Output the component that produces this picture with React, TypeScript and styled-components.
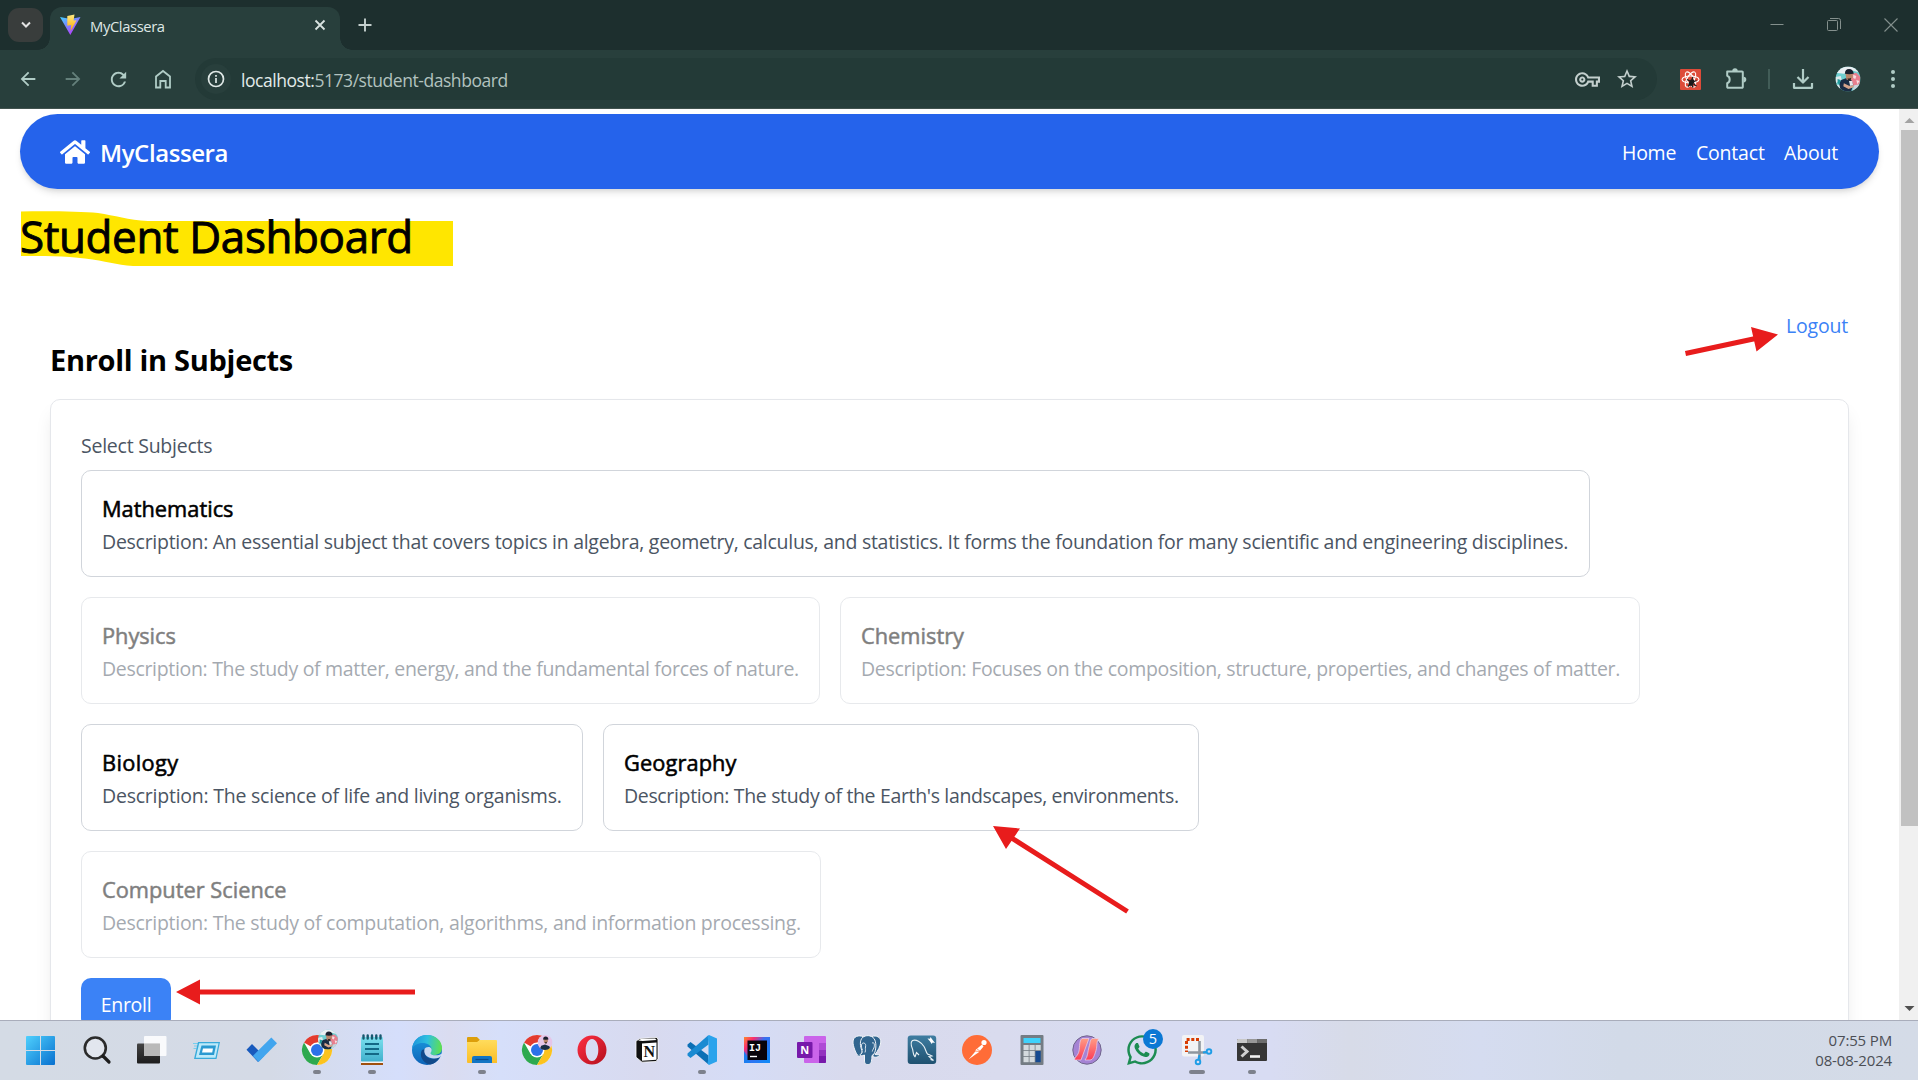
import React from "react";
import styled, { createGlobalStyle } from "styled-components";
import { FaHome, FaWhatsapp } from "react-icons/fa";
import { MdArrowBack, MdArrowForward, MdRefresh, MdStarBorder, MdOutlineVpnKey } from "react-icons/md";

const GlobalStyle = createGlobalStyle`
  * { box-sizing: border-box; }
  html, body { margin: 0; padding: 0; overflow: hidden; }
  body { font-family: "Open Sans", "Noto Sans", sans-serif; }
  h1, h2, h3, p { margin: 0; }
  svg { display: block; flex: none; }
`;

const Screen = styled.div`
  width: 1918px;
  height: 1080px;
  display: flex;
  flex-direction: column;
  overflow: hidden;
  background: #fff;
`;

/* ---------- browser chrome ---------- */
const TabStrip = styled.div`
  height: 50px;
  flex: none;
  background: #1d2f2e;
  display: flex;
  align-items: flex-start;
`;
const TabSearch = styled.div`
  width: 35px;
  height: 34px;
  margin: 8px 7px 0 8px;
  border-radius: 11px;
  background: #393d3c;
  display: flex;
  align-items: center;
  justify-content: center;
`;
const Tab = styled.div`
  position: relative;
  width: 290px;
  height: 43px;
  margin-top: 7px;
  border-radius: 12px 12px 0 0;
  background: #283f3c;
  display: flex;
  align-items: flex-start;
  padding: 7px 14px 0 10px;
  &::before, &::after {
    content: "";
    position: absolute;
    bottom: 0;
    width: 12px;
    height: 12px;
  }
  &::before { left: -12px; background: radial-gradient(circle at 0 0, transparent 11.5px, #283f3c 12px); }
  &::after { right: -12px; background: radial-gradient(circle at 100% 0, transparent 11.5px, #283f3c 12px); }
`;
const TabTitle = styled.div`
  flex: 1;
  margin-left: 9px;
  padding-top: 1px;
  font-size: 14.8px;
  line-height: 22px;
  letter-spacing: -0.4px;
  color: #dfe8e6;
`;
const NewTab = styled.div`
  margin: 17px 0 0 18px;
`;
const WindowButtons = styled.div`
  margin-left: auto;
  display: flex;
  gap: 43px;
  padding: 17px 20px 0 0;
`;
const Toolbar = styled.div`
  height: 59px;
  flex: none;
  background: #283f3c;
  border-bottom: 1px solid #42534f;
  display: flex;
  align-items: center;
  color: #b0ccc6;
  padding-left: 15px;
`;
const NavIcons = styled.div`
  display: flex;
  gap: 19px;
  width: 180px;
`;
const NavIcon = styled.div<{ $dim?: boolean }>`
  width: 26px;
  height: 26px;
  display: flex;
  align-items: center;
  justify-content: center;
  color: ${(p) => (p.$dim ? "#64807b" : "#b0ccc6")};
`;
const Omnibox = styled.div`
  width: 1462px;
  height: 42px;
  border-radius: 21px;
  background: #233a37;
  display: flex;
  align-items: center;
  padding: 0 18px 0 6px;
`;
const InfoChip = styled.div`
  width: 30px;
  height: 30px;
  border-radius: 50%;
  background: #283f3c;
  display: flex;
  align-items: center;
  justify-content: center;
`;
const Url = styled.div`
  flex: 1;
  margin-left: 10px;
  padding-top: 1px;
  font-size: 17.5px;
  line-height: 24px;
  letter-spacing: -0.45px;
  color: #b2c2bf;
  span { color: #e2ebe9; }
`;
const OmniIcons = styled.div`
  display: flex;
  align-items: center;
  gap: 15px;
  color: #c3cfcd;
`;
const Extensions = styled.div`
  display: flex;
  align-items: center;
  margin-left: 23px;
`;
const ExtIcon = styled.svg<{ $gap: number }>`
  margin-left: ${(p) => p.$gap}px;
`;
const Divider = styled.div`
  width: 2px;
  height: 20px;
  margin: 0 22px 0 21px;
  background: #425d58;
`;

/* ---------- page ---------- */
const Viewport = styled.div`
  height: 911px;
  flex: none;
  display: flex;
  overflow: hidden;
`;
const Page = styled.main`
  width: 1899px;
  height: 1170px;
  flex: none;
  padding: 5px 20px 0;
`;
const Navbar = styled.nav`
  height: 75px;
  width: 1859px;
  border-radius: 37.5px;
  background: #2563eb;
  color: #fff;
  display: flex;
  align-items: center;
  justify-content: space-between;
  padding: 0 40px;
  box-shadow: 0 5px 7.5px -1px rgba(0, 0, 0, 0.1), 0 2.5px 5px -2px rgba(0, 0, 0, 0.1);
`;
const Brand = styled.div`
  display: flex;
  align-items: center;
  gap: 10px;
  font-size: 24px;
  line-height: 35px;
  font-weight: 600;
  letter-spacing: -0.43px;
`;
const BrandName = styled.span`
  padding-top: 2px;
`;
const Links = styled.div`
  display: flex;
  gap: 20px;
  font-size: 19.5px;
  line-height: 30px;
  padding-top: 2px;
`;
const Fit = styled.span<{ $w?: number; $ls?: number }>`
  display: inline-block;
  white-space: nowrap;
  width: ${(p) => (p.$w ? p.$w + "px" : "auto")};
  letter-spacing: ${(p) => p.$ls || 0}px;
`;
const Title = styled.h1`
  position: relative;
  margin-top: 20px;
  height: 50px;
  font-size: 44px;
  line-height: 55px;
  font-weight: 400;
  letter-spacing: -0.4px;
  color: #000;
  -webkit-text-stroke: 0.9px #000;
  span { position: relative; }
`;
const Overlay = styled.svg<{ $x: number; $y: number }>`
  position: absolute;
  left: ${(p) => p.$x}px;
  top: ${(p) => p.$y}px;
  overflow: visible;
  pointer-events: none;
  -webkit-text-stroke: 0;
`;
const Section = styled.section`
  padding: 51px 30px 0;
`;
const LogoutRow = styled.div`
  display: flex;
  justify-content: flex-end;
  height: 30px;
  padding-top: 1px;
  font-size: 19.5px;
  line-height: 30px;
  color: #3b82f6;
`;
const SectionTitle = styled.h2`
  font-size: 29px;
  line-height: 40px;
  font-weight: 700;
  letter-spacing: -0.3px;
  color: #000;
  margin-bottom: 19px;
`;
const Panel = styled.div`
  width: 1799px;
  height: 700px;
  border: 1px solid #e5e7eb;
  border-radius: 10px;
  padding: 30px;
  box-shadow: 0 12.5px 19px -4px rgba(0, 0, 0, 0.1), 0 5px 7.5px -5px rgba(0, 0, 0, 0.1);
`;
const Label = styled.div`
  height: 30px;
  padding-top: 1px;
  font-size: 19.5px;
  line-height: 30px;
  letter-spacing: -0.24px;
  color: #4b5563;
  margin-bottom: 10px;
`;
const Subjects = styled.div`
  display: flex;
  flex-wrap: wrap;
  gap: 20px;
`;
const Subject = styled.div<{ $w: number; $off?: boolean }>`
  width: ${(p) => p.$w}px;
  height: 107px;
  border: 1px solid #d1d5db;
  border-radius: 10px;
  padding: 20px;
  opacity: ${(p) => (p.$off ? 0.5 : 1)};
  white-space: nowrap;
`;
const SubjectName = styled.h3`
  font-size: 21.8px;
  line-height: 35px;
  font-weight: 400;
  color: #000;
  -webkit-text-stroke: 0.55px #000;
`;
const SubjectText = styled.p`
  padding-top: 1px;
  font-size: 19.5px;
  line-height: 30px;
  color: #4b5563;
`;
const EnrollButton = styled.button`
  display: block;
  width: 90px;
  height: 50px;
  margin-top: 20px;
  padding: 3px 0 0;
  border: 0;
  border-radius: 10px;
  background: #3b82f6;
  color: #fff;
  font-family: inherit;
  font-size: 19.5px;
  line-height: 30px;
  letter-spacing: -0.3px;
`;
const Scrollbar = styled.div`
  width: 19px;
  height: 911px;
  background: #f0f0f0;
  display: flex;
  flex-direction: column;
  align-items: flex-end;
  justify-content: space-between;
`;
const Thumb = styled.div`
  width: 17px;
  height: 696px;
  margin-bottom: auto;
  background: #c1c1c1;
`;

/* ---------- taskbar ---------- */
const Taskbar = styled.footer`
  height: 60px;
  flex: none;
  border-top: 1px solid #a9adbb;
  background: linear-gradient(90deg, #d4dbe5 0, #d4dae6 270px, #d5defb 400px, #dadcf0 450px, #d6dffa 500px, #d8daef 650px, #d5dcf6 740px, #d8daed 850px, #d9dbee 1000px, #d8dcf2 1150px, #d8dcf3 1270px, #d7dbe8 1350px, #d5dcf0 1480px, #d2dae8 1620px, #d4dbe7 1918px);
  display: flex;
  justify-content: space-between;
  padding-left: 14.5px;
`;
const Apps = styled.div`
  display: flex;
`;
const AppSlot = styled.div`
  width: 55px;
  display: flex;
  flex-direction: column;
  align-items: center;
  padding-top: 12px;
`;
const Running = styled.div<{ $wide?: boolean }>`
  width: ${(p) => (p.$wide ? 16 : 8)}px;
  height: 4px;
  margin-top: 3px;
  border-radius: 2px;
  background: #7d818c;
`;
const Clock = styled.div`
  width: 120px;
  margin-right: 26px;
  padding-top: 9px;
  text-align: right;
  font-size: 15px;
  line-height: 20px;
  letter-spacing: -0.15px;
  color: #4b4e55;
`;

const RED = "#e81c1c";

/* A small round portrait, used for the profile picture and the profile badge */
const Portrait = ({ cx, cy, r, solo }: { cx: number; cy: number; r: number; solo?: boolean }) => (
  <g transform={`translate(${cx - r} ${cy - r}) scale(${r / 12})`}>
    <clipPath id={`p${cx}${cy}${r}`}><circle cx="12" cy="12" r="12" /></clipPath>
    <g clipPath={`url(#p${cx}${cy}${r})`}>
      <rect width="24" height="24" fill={solo ? "#e5c5e8" : "#6fcfd0"} />
      {!solo && <>
        <path d="M0 0h24v6L17 4 8 7 0 6z" fill="#e9eff2" />
        <path d="M16 7l4-1 4 4-1 7-5 3-4-7z" fill="#e8808f" />
        <path d="M17 8l3 1-1 3-2-1zM20 13l3 1-2 3z" fill="#f7dfe3" />
        <path d="M0 10l5-1 1 4-6 3zM0 17l4 1 2 6H0z" fill="#dfe9ea" />
        <path d="M18 18l5-1-2 7h-5z" fill="#c9d4dc" />
      </>}
      <path d={solo ? "M3 24l3-7 6-2 7 3 2 6z" : "M5 24l-1.500-8 2-3 5-2 5 2.500 1.500 4-2 6.500z"} fill="#1a2c45" />
      <path d="M9.500 6.500h7v4l-2.500 3-3.500-1z" fill="#b98469" />
      <path d="M9 7Q9 2.500 13 2.500T17.500 7L13 7.500z" fill="#18202e" />
      <path d="M11.500 11.200q2 1 3.500-.3l-.5 2.500-2 .3z" fill="#2a2422" />
      {!solo && <>
        <path d="M8 16l5 2.500 4-.5.500 2-5 1.500-5-2.500z" fill="#d6a48b" />
        <path d="M2 12l3 1-1 4-2-1z" fill="#209a9c" />
        <path d="M13 14l3 0 1 4-3 .5z" fill="#e6eaee" />
      </>}
    </g>
  </g>
);

const ChromeLogo = () => (
  <g>
    <circle cx="17" cy="17" r="15" fill="#fff" />
    <path d="M17 17L4 9.5A15 15 0 0 1 30 9.5H17z" fill="#e33b2e" />
    <path d="M4 9.5A15 15 0 0 0 17 32L23.5 20.75 17 17 10.5 20.75z" fill="#2da94f" />
    <path d="M30 9.5A15 15 0 0 1 17 32L23.5 20.75 17 9.5z" fill="#fcc31e" />
    <circle cx="17" cy="17" r="7.5" fill="#fff" />
    <circle cx="17" cy="17" r="6" fill="#2c72e8" />
  </g>
);

const apps: { id: string; run?: boolean; wide?: boolean; art: React.ReactNode }[] = [
  { id: "start", art: <>
    <defs><linearGradient id="win" x1="0" y1="0" x2="1" y2="1"><stop offset="0" stopColor="#4fd0fd" /><stop offset="1" stopColor="#0870cf" /></linearGradient></defs>
    <path d="M2 3h13v14H1V4a1 1 0 0 1 1-1zM16 3h13a1 1 0 0 1 1 1v13H16zM1 18h14v14H2a1 1 0 0 1-1-1zM16 18h14v13a1 1 0 0 1-1 1H16z" fill="url(#win)" />
  </> },
  { id: "search", art: <>
    <circle cx="15.3" cy="15" r="10.5" fill="#e2e6ee" stroke="#2b2b2b" strokeWidth="2.6" />
    <path d="M23 23l6 6" stroke="#1d1d1d" strokeWidth="3.2" strokeLinecap="round" />
  </> },
  { id: "views", art: <>
    <defs><linearGradient id="tv" x1="0" y1="0" x2="0" y2="1"><stop offset="0" stopColor="#444" /><stop offset="1" stopColor="#1d1d1d" /></linearGradient></defs>
    <rect x="2" y="10.5" width="23" height="20" rx="1" fill="url(#tv)" />
    <rect x="9" y="3" width="22.5" height="20" rx="1" fill="#fff" opacity=".86" />
    <path d="M9 10.5h16V23H10a1 1 0 0 1-1-1z" fill="#b9b9b9" />
  </> },
  { id: "run", art: <>
    <path d="M3 10.500h5M4 13h4M3.500 15.500h3" stroke="#75cfee" strokeWidth="1" />
    <path d="M8 9h22l-3.500 17H4z" fill="#39aada" />
    <path d="M9.200 10.300h19.300L25.500 24.700H5.700z" fill="#bdeafa" />
    <path d="M11.500 12.500h14.500L24 22H9z" fill="#2b9ad1" />
    <path d="M13 15.500h10l-.8 4H12z" fill="#fff" />
  </> },
  { id: "todo", art: <>
    <path d="M7 11l-5.500 5.700 11.500 12.300 6-6z" fill="#185abd" />
    <path d="M26.300 4.500L32 10.300 13.600 29 7.800 23z" fill="#41a5ee" />
  </> },
  { id: "chrome-a", run: true, art: <><ChromeLogo /><Portrait cx={28} cy={6.5} r={10} /></> },
  { id: "notepad", run: true, art: <>
    <defs><linearGradient id="np" x1="0" y1="0" x2="0" y2="1"><stop offset="0" stopColor="#7be0ee" /><stop offset="1" stopColor="#3fafcc" /></linearGradient></defs>
    <rect x="6" y="4" width="22" height="25" rx="1" fill="url(#np)" />
    <path d="M6 28.500h22v1.500H6z" fill="#f3f3f3" /><path d="M6 30h22v2H6z" fill="#a0500f" />
    <path d="M10 11h14M10 16h14M10 21h14" stroke="#136986" strokeWidth="2" />
    <path d="M8.500 2.500v3M12.700 2.500v3M17 2.500v3M21.300 2.500v3M25.500 2.500v3" stroke="#17586f" strokeWidth="2.400" strokeLinecap="round" />
  </> },
  { id: "edge", art: <>
    <defs>
      <linearGradient id="e1" x1="0" y1=".3" x2="1" y2=".4"><stop offset="0" stopColor="#1d93dc" /><stop offset=".5" stopColor="#2fc0df" /><stop offset="1" stopColor="#5fe04f" /></linearGradient>
      <linearGradient id="e2" x1="0" y1="0" x2="0" y2="1"><stop offset="0" stopColor="#1c9ce0" /><stop offset="1" stopColor="#0d63b8" /></linearGradient>
    </defs>
    <circle cx="17" cy="17" r="15" fill="url(#e2)" />
    <path d="M2 16C3 7 9 2 17 2c9 0 15 6 15 13 0 5-4 7-8 7-3 0-5-1-4-2 1-1 1.500-2 1.500-3.500 0-4-4-6.500-9-6.500-5 0-9 2.500-10.500 6z" fill="url(#e1)" />
    <path d="M12 17c-3 5 0 13 8 14.500 4-.5 8-3.500 10-7.500-6 3-17 3-15-8z" fill="#114a8b" />
    <path d="M14.500 16c-1.500 6 4 9.500 9.500 9.500 4 0 6-1.300 7-2.500l1.300 1-.8 1.500 1.500 1V20l-4 2c-4 1-9-.2-8.500-2 2.500-3.500.5-6-2-6-2 0-3.300.8-4 2z" fill="#d8dff4" opacity=".92" />
  </> },
  { id: "files", run: true, art: <>
    <defs><linearGradient id="fl" x1="0" y1="0" x2="0" y2="1"><stop offset="0" stopColor="#ffdc5c" /><stop offset="1" stopColor="#fbbd26" /></linearGradient></defs>
    <path d="M2 5a1 1 0 0 1 1-1h9l3 3-3 3H2z" fill="#dd9f0b" />
    <path d="M2 9h10l3-2h16a1 1 0 0 1 1 1v22H3a1 1 0 0 1-1-1z" fill="url(#fl)" />
    <path d="M7 30v-5a2 2 0 0 1 2-2h16a2 2 0 0 1 2 2v5z" fill="#1275c4" />
    <path d="M10.500 26.500h13" stroke="#0b4d8d" strokeWidth="1.200" />
  </> },
  { id: "chrome-b", art: <><ChromeLogo /><Portrait cx={25} cy={9.5} r={7.5} solo /></> },
  { id: "opera", art: <>
    <defs><linearGradient id="op" x1="0" y1="0" x2="1" y2="1"><stop offset="0" stopColor="#ff2f43" /><stop offset="1" stopColor="#b3101c" /></linearGradient></defs>
    <path fillRule="evenodd" d="M17 2.500a14.500 14.500 0 1 0 0 29 14.500 14.500 0 0 0 0-29zm0 3.500c4 0 6.300 5 6.300 11S21 28 17 28s-6.300-5-6.300-11S13 6 17 6z" fill="url(#op)" />
  </> },
  { id: "notion", art: <>
    <path d="M6 8l4-2.500 17-1 1 2V26l-2 2.500-14 .7-6-5z" fill="#111" stroke="#fff" strokeWidth=".8" />
    <path d="M8 7.500l3-1.500 14-.5 1.500 1.500-14 1z" fill="#fff" />
    <path d="M12 10.500l14.500-1v17.300L12 27.800z" fill="#fff" />
    <path d="M7.500 9l2.800 2.500V26l-2.800-3z" fill="#111" />
    <text x="19.300" y="24" textAnchor="middle" fontFamily="Liberation Serif, serif" fontWeight="700" fontSize="16" fill="#111">N</text>
  </> },
  { id: "code", run: true, art: <>
    <path d="M2.500 11.500l3-2.500 18 13.500v9L2.500 13.500z" fill="#0b6fb5" />
    <path d="M2.500 22.500l3 2.500 18-13.500v-9.500L2.500 20.500z" fill="#1a8ad2" />
    <path d="M24 2l8 3.500v23L24 32l-1.500-1.500 1-6V9.500l-1-6z" fill="#2aa3ec" />
  </> },
  { id: "idea", art: <>
    <defs><linearGradient id="ij" x1="0" y1="0" x2="1" y2=".8"><stop offset="0" stopColor="#fc8a2c" /><stop offset=".25" stopColor="#fb2b70" /><stop offset=".5" stopColor="#3a6df0" /><stop offset="1" stopColor="#1288f7" /></linearGradient></defs>
    <rect x="4" y="4" width="26" height="26" fill="url(#ij)" />
    <path d="M4 18l7 12H4z" fill="#1c7df0" />
    <rect x="7.500" y="7.500" width="19.500" height="19.500" fill="#08040a" />
    <text x="9" y="17.500" fontFamily="Liberation Mono, monospace" fontWeight="700" fontSize="10" fill="#fff">IJ</text>
    <path d="M10 23.500h7" stroke="#fff" strokeWidth="1.400" />
  </> },
  { id: "onenote", art: <>
    <rect x="9" y="3" width="22" height="27" rx="1" fill="#ca64ea" />
    <path d="M24 10h7v7h-7z" fill="#ae4bd5" /><path d="M24 17h7v6h-7z" fill="#9332bf" /><path d="M24 23h7v6a1 1 0 0 1-1 1h-6z" fill="#7719aa" />
    <rect x="2" y="9" width="15.500" height="16" rx="1" fill="#7719aa" />
    <text x="9.700" y="21" textAnchor="middle" fontFamily="Open Sans, sans-serif" fontWeight="700" fontSize="11" fill="#fff">N</text>
  </> },
  { id: "postgres", art: <g fill="#31658f" stroke="#f2f5f9" strokeWidth="1" strokeLinejoin="round">
    <path d="M13 3.500C9 2 3 3 3 9c0 4 3 12.500 5.500 14 1.500.8 2.500-1 3.500-2.500z" />
    <path d="M22 3.500c4-1.500 9 .5 8.800 5.500-.2 4-3 9-5.800 12.500l5 .5c-1 2-5 3-7 1.500z" />
    <path d="M12.500 4.500C16 1.800 21 2 24 5.500c2.500 3.500 2.500 11 0 15.500l-2 1.500c-.3 4 0 8.500-3.500 9-3.500.3-4-1.500-4-4.500v-5c-3 1.500-5 .5-4.500-.5 2-.8 2.500-2 2-4-2-4-2.500-10 .5-13z" />
    <path d="M12.500 17c-2-4-1-7 1-7s2.500 2 2 4c-.5 2 .5 3-.5 5.500M22 10c2.500-1 2.500 1.500 2.300 3.500s-2 3.500-2 5" fill="none" strokeWidth=".9" />
  </g> },
  { id: "mysql", art: <>
    <defs><linearGradient id="ms" x1="0" y1="0" x2="0" y2="1"><stop offset="0" stopColor="#3f7da1" /><stop offset="1" stopColor="#1f5170" /></linearGradient></defs>
    <rect x="2.700" y="2.500" width="28.500" height="28.500" rx="3" fill="url(#ms)" />
    <path d="M10 24c-2.500-3-1.500-5-2.500-8C6 12.500 5.500 9 7.500 7.500c3.500-1.500 8.500 1.500 11.500 6 1.800 3 2 6 3.500 7.500 1.500.8 3 1 4.500 2l-3 .5 4.500 4-3-1M10 24l1.500-4.500 2.500 2.500" fill="none" stroke="#e8f0f4" strokeWidth="1.100" />
    <path d="M22.500 5.500l2.500.3.500-1.800 1.800 2.500 2.700 3.500-2.300-.5-1 1.500-2-3z" fill="#fff" />
  </> },
  { id: "postman", art: <>
    <circle cx="17" cy="17" r="15" fill="#ff6c37" />
    <path d="M8.500 26.500l6-7 1.500-3 6-5 1.500 2-5 6-3 2z" fill="#fff" />
    <circle cx="24" cy="9.500" r="2.600" fill="#fff" />
    <path d="M14 18l6 .5M16.500 15.500l4 3" stroke="#ff6c37" strokeWidth=".7" />
  </> },
  { id: "calculator", art: <>
    <rect x="5.500" y="2" width="23" height="30" rx="1" fill="#747c84" />
    <rect x="8.500" y="5" width="17" height="5" fill="#3fd2fb" />
    {[0, 1, 2].map((r) => [0, 1, 2].map((c) => (r > 0 && c === 2 ? null : <rect key={`${r}${c}`} x={8.5 + c * 6} y={12 + r * 6} width="5.2" height="5.2" fill="#d4dade" />)))}
    <rect x="20.500" y="18" width="5.200" height="11.200" fill="#164a91" />
  </> },
  { id: "studio", art: <>
    <defs><linearGradient id="st" x1="0" y1="0" x2="0" y2="1"><stop offset="0" stopColor="#ff9b84" /><stop offset="1" stopColor="#fb3d58" /></linearGradient></defs>
    <circle cx="17" cy="17" r="14.200" fill="#a583d4" stroke="#70668c" strokeWidth="1" />
    <path d="M12 5.500h7L11 27H4.500c0-3 3.500-4 4.500-9s0-10 3-12.500zM22 5.500h7c-3 3-1.500 7-3 12s-3 9.500-6 9.500h-5c3-3 2.500-8 4-13s.5-6 3-8.500z" fill="url(#st)" stroke="#e8d5ef" strokeWidth=".7" />
  </> },
  { id: "whatsapp", art: <>
    <FaWhatsapp x="0" y="0" size={34} color="#1c8c52" />
    <circle cx="28" cy="6" r="10" fill="#0b78d4" />
    <text x="28" y="11" textAnchor="middle" fontFamily="Open Sans, sans-serif" fontSize="14.5" fill="#fff">5</text>
  </> },
  { id: "snip", run: true, wide: true, art: <>
    <rect x="2" y="2" width="22" height="21.500" rx="2" fill="#f2f3f5" />
    <path d="M19 6.500H6.500V19" fill="none" stroke="#d83b01" strokeWidth="3" strokeDasharray="3 1.700" />
    <path d="M19.500 8v19M8 19.500h18" stroke="#8e969e" strokeWidth="2.600" />
    <circle cx="29" cy="18.500" r="2.300" fill="none" stroke="#1e9de6" strokeWidth="1.900" />
    <circle cx="18" cy="29" r="2.300" fill="none" stroke="#1e9de6" strokeWidth="1.900" />
    <path d="M19.500 22l-1 4M23 19.500l3.500-.5" stroke="#1e9de6" strokeWidth="2" />
  </> },
  { id: "terminal", run: true, art: <>
    <rect x="2" y="6" width="30" height="22" rx="1" fill="#363636" />
    <path d="M3 6h9.500v4H2V7a1 1 0 0 1 1-1z" fill="#c9c9c9" /><path d="M12.500 6h10v4h-10z" fill="#989898" /><path d="M22.500 6H31a1 1 0 0 1 1 1v3h-9.500z" fill="#6d6d6d" />
    <path d="M6.500 13.500l5.500 5-5.500 5" fill="none" stroke="#d0d0d0" strokeWidth="3" />
    <path d="M15 23.500h10" stroke="#f2f2f2" strokeWidth="2.600" />
  </> },
];

const subjects = [
  { name: "Mathematics", w: 1509, off: false, ls: -0.27, nls: 0, text: "An essential subject that covers topics in algebra, geometry, calculus, and statistics. It forms the foundation for many scientific and engineering disciplines." },
  { name: "Physics", w: 739, off: true, ls: -0.32, nls: -0.05, text: "The study of matter, energy, and the fundamental forces of nature." },
  { name: "Chemistry", w: 800, off: true, ls: -0.32, nls: 0, text: "Focuses on the composition, structure, properties, and changes of matter." },
  { name: "Biology", w: 502, off: false, ls: -0.235, nls: 0.35, text: "The science of life and living organisms." },
  { name: "Geography", w: 596, off: false, ls: -0.345, nls: 0.1, text: "The study of the Earth's landscapes, environments." },
  { name: "Computer Science", w: 740, off: true, ls: -0.28, nls: 0, text: "The study of computation, algorithms, and information processing." },
];

const ViteLogo = () => (
  <svg width="21" height="24" viewBox="0 0 21 24">
    <defs>
      <linearGradient id="v1" x1="0" y1="0" x2=".7" y2="1"><stop offset="0" stopColor="#41d1ff" /><stop offset="1" stopColor="#bd34fe" /></linearGradient>
      <linearGradient id="v2" x1="0" y1="0" x2="0" y2="1"><stop offset="0" stopColor="#ffea83" /><stop offset="1" stopColor="#ffa800" /></linearGradient>
    </defs>
    <path d="M0 3l10.500 2L20.500 3 10.300 21z" fill="url(#v1)" />
    <path d="M7.300 2l7.200-1.500-.9 6 3-.3-6 10.800.6-6-3.900.8z" fill="url(#v2)" />
  </svg>
);

export default function App() {
  return (
    <Screen>
      <GlobalStyle />
      <TabStrip>
        <TabSearch>
          <svg width="12" height="8" viewBox="0 0 12 8"><path d="M2 1.500l4 4 4-4" fill="none" stroke="#e3e3e3" strokeWidth="2" /></svg>
        </TabSearch>
        <Tab>
          <ViteLogo />
          <TabTitle>MyClassera</TabTitle>
          <svg width="12" height="22" viewBox="0 0 12 22"><path d="M1.500 6.500l9 9M10.500 6.500l-9 9" stroke="#d8e3e0" strokeWidth="1.800" /></svg>
        </Tab>
        <NewTab>
          <svg width="14" height="16" viewBox="0 0 14 16"><path d="M7 1.500v13M.5 8h13" stroke="#c4cfcd" strokeWidth="1.900" /></svg>
        </NewTab>
        <WindowButtons>
          <svg width="14" height="15" viewBox="0 0 14 15"><path d="M.5 7.500h13" stroke="#84908d" /></svg>
          <svg width="14" height="15" viewBox="0 0 14 15"><g fill="none" stroke="#84908d"><rect x=".5" y="3.500" width="10" height="10" rx="1" /><path d="M3 1.500h8.500a2 2 0 0 1 2 2V12" /></g></svg>
          <svg width="14" height="15" viewBox="0 0 14 15"><path d="M.5 1.500l13 13M13.500 1.500l-13 13" stroke="#84908d" strokeWidth="1.100" /></svg>
        </WindowButtons>
      </TabStrip>

      <Toolbar>
        <NavIcons>
          <NavIcon><MdArrowBack size={22} /></NavIcon>
          <NavIcon $dim><MdArrowForward size={22} /></NavIcon>
          <NavIcon><MdRefresh size={23} /></NavIcon>
          <NavIcon>
            <svg width="18" height="20" viewBox="0 0 18 20"><path d="M2 18.500V7.500L9 2l7 5.500v11h-4.300v-6.500H6.300v6.500z" fill="none" stroke="currentColor" strokeWidth="1.800" /></svg>
          </NavIcon>
        </NavIcons>
        <Omnibox>
          <InfoChip>
            <svg width="18" height="18" viewBox="0 0 18 18"><circle cx="9" cy="9" r="7.500" fill="none" stroke="#dfe8e6" strokeWidth="1.700" /><path d="M9 8v5M9 5v1.700" stroke="#dfe8e6" strokeWidth="1.700" /></svg>
          </InfoChip>
          <Url><span>localhost:</span>5173/student-dashboard</Url>
          <OmniIcons>
            <MdOutlineVpnKey size={25} />
            <MdStarBorder size={24} />
          </OmniIcons>
        </Omnibox>
        <Extensions>
          <svg width="21" height="21" viewBox="0 0 21 21">
            <rect width="21" height="21" rx="1" fill="#dd4b39" />
            <g fill="none" stroke="#fff" strokeWidth="1.100"><ellipse cx="10.500" cy="10.500" rx="8.500" ry="3.500" /><ellipse cx="10.500" cy="10.500" rx="8.500" ry="3.500" transform="rotate(60 10.500 10.500)" /><ellipse cx="10.500" cy="10.500" rx="8.500" ry="3.500" transform="rotate(120 10.500 10.500)" /></g>
            <ellipse cx="11.500" cy="13.500" rx="2.400" ry="3.600" fill="#1a1a1a" transform="rotate(30 11.500 13.500)" />
            <path d="M7 10.500l3 1.500M8 17.500l2.500-2.500M12 10l1-2M14 12.500l2.500-1M13.500 15l3 2M12 16l1 2.500" stroke="#1a1a1a" strokeWidth="1.300" />
          </svg>
          <ExtIcon $gap={22} width="24" height="24" viewBox="0 0 24 24">
            <path d="M4.200 4.500H19a.8.8 0 0 1 .8.800V20a.8.8 0 0 1-.8.800H5a.8.8 0 0 1-.8-.8v-3.700c3.300-1.200 3.300-6.400 0-7.600z" fill="none" stroke="currentColor" strokeWidth="2" strokeLinejoin="round" />
            <path d="M9.300 4a2.700 2.700 0 0 1 5.400 0zM20.500 9.800a2.800 2.800 0 0 1 0 5.600z" fill="currentColor" />
          </ExtIcon>
          <Divider />
          <svg width="22" height="22" viewBox="0 0 22 22">
            <path d="M11 1v13M5.500 9l5.500 5.500L16.500 9M2 15v4.800h18V15" fill="none" stroke="currentColor" strokeWidth="2.200" strokeLinejoin="round" />
          </svg>
          <ExtIcon $gap={21} width="26" height="26" viewBox="0 0 26 26"><Portrait cx={13} cy={13} r={12.5} /></ExtIcon>
          <ExtIcon $gap={29} width="6" height="20" viewBox="0 0 6 20" fill="currentColor"><circle cx="3" cy="3" r="2" /><circle cx="3" cy="10" r="2" /><circle cx="3" cy="17" r="2" /></ExtIcon>
        </Extensions>
      </Toolbar>

      <Viewport>
        <Page>
          <Navbar>
            <Brand>
              <FaHome size={30} />
              <BrandName>MyClassera</BrandName>
            </Brand>
            <Links>
              <Fit $w={54} $ls={-0.25}>Home</Fit>
              <Fit $w={68} $ls={-0.2}>Contact</Fit>
              <Fit $w={55} $ls={-0.15}>About</Fit>
            </Links>
          </Navbar>
          <Title>
            <Overlay $x={1} $y={2} width="432" height="56">
              <path d="M0 .5C30 0 60 .5 77 2c17 2.500 30 7 50 8h305v45H112C95 54 85 50 64 47.500 45 45 20 45 0 45z" fill="#ffe600" />
            </Overlay>
            <span>Student Dashboard</span>
          </Title>
          <Section>
            <LogoutRow><Fit $w={63} $ls={-0.2}>Logout</Fit></LogoutRow>
            <SectionTitle>Enroll in Subjects</SectionTitle>
            <Panel>
              <Label>Select Subjects</Label>
              <Subjects>
                {subjects.map((s) => (
                  <Subject key={s.name} $w={s.w} $off={s.off}>
                    <SubjectName><Fit $ls={s.nls}>{s.name}</Fit></SubjectName>
                    <SubjectText><Fit $ls={s.ls}>Description: {s.text}</Fit></SubjectText>
                  </Subject>
                ))}
              </Subjects>
              <EnrollButton>Enroll</EnrollButton>
            </Panel>
          </Section>
        </Page>
        <Scrollbar>
          <svg width="17" height="21" viewBox="0 0 17 21"><path d="M3.500 14l5-5 5 5z" fill="#a3a3a3" /></svg>
          <Thumb />
          <svg width="17" height="21" viewBox="0 0 17 21"><path d="M3.500 7h10l-5 5z" fill="#505050" /></svg>
        </Scrollbar>
      </Viewport>

      <Overlay $x={0} $y={0} width="1918" height="1080">
        <g fill={RED} stroke={RED}>
          <path d="M1685.500 353.500L1758 338M415 992H198M1127.500 911.500L1010 837" strokeWidth="5" />
          <path d="M1751 327l27 7.500-21.500 17zM176 992l24-12.500v25zM993 826l27 2.500-14 20.500z" stroke="none" />
        </g>
      </Overlay>

      <Taskbar>
        <Apps>
          {apps.map((a) => (
            <AppSlot key={a.id}>
              <svg width="34" height="34" viewBox="0 0 34 34" overflow="visible">{a.art}</svg>
              {a.run && <Running $wide={a.wide} />}
            </AppSlot>
          ))}
        </Apps>
        <Clock>07:55 PM<br />08-08-2024</Clock>
      </Taskbar>
    </Screen>
  );
}
